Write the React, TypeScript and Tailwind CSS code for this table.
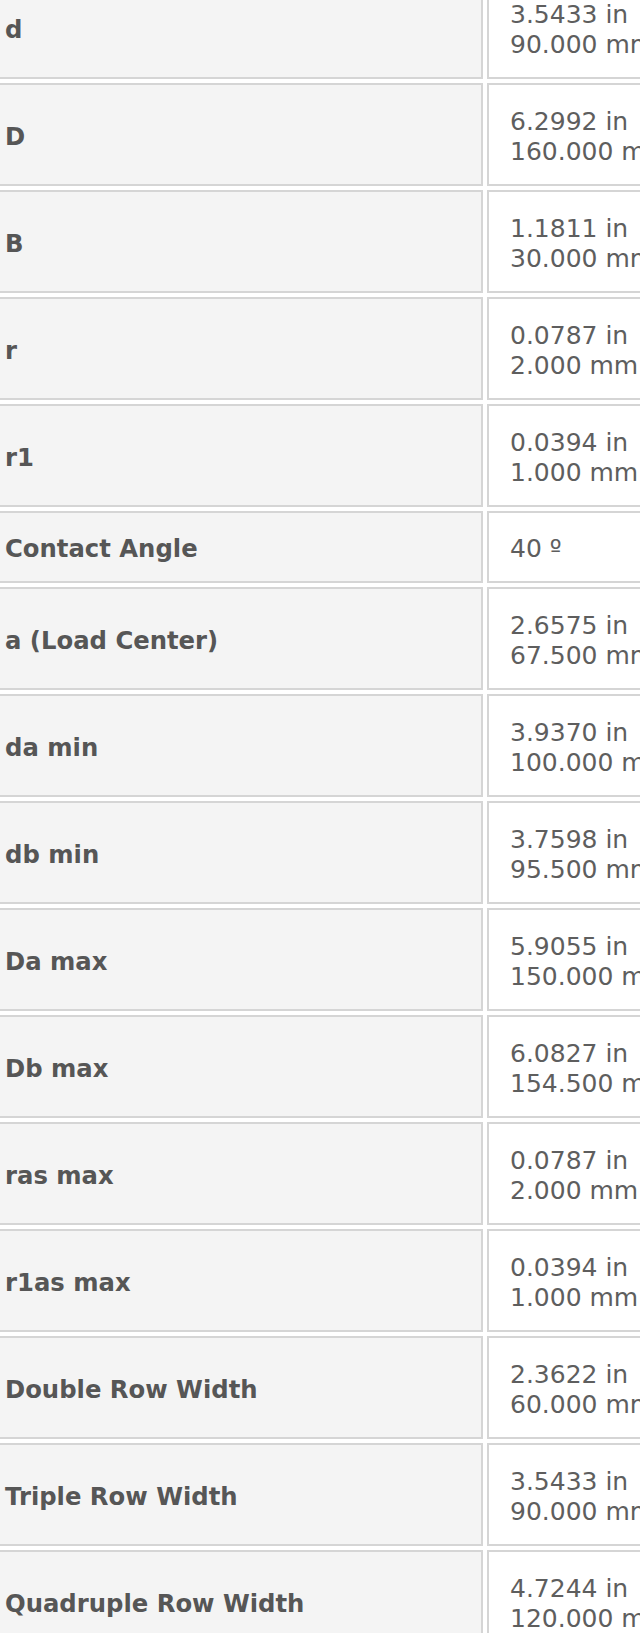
const rows: { label: string; values: string[] }[] = [
  { label: 'd', values: ['3.5433 in', '90.000 mm'] },
  { label: 'D', values: ['6.2992 in', '160.000 mm'] },
  { label: 'B', values: ['1.1811 in', '30.000 mm'] },
  { label: 'r', values: ['0.0787 in', '2.000 mm'] },
  { label: 'r1', values: ['0.0394 in', '1.000 mm'] },
  { label: 'Contact Angle', values: ['40 º'] },
  { label: 'a (Load Center)', values: ['2.6575 in', '67.500 mm'] },
  { label: 'da min', values: ['3.9370 in', '100.000 mm'] },
  { label: 'db min', values: ['3.7598 in', '95.500 mm'] },
  { label: 'Da max', values: ['5.9055 in', '150.000 mm'] },
  { label: 'Db max', values: ['6.0827 in', '154.500 mm'] },
  { label: 'ras max', values: ['0.0787 in', '2.000 mm'] },
  { label: 'r1as max', values: ['0.0394 in', '1.000 mm'] },
  { label: 'Double Row Width', values: ['2.3622 in', '60.000 mm'] },
  { label: 'Triple Row Width', values: ['3.5433 in', '90.000 mm'] },
  { label: 'Quadruple Row Width', values: ['4.7244 in', '120.000 mm'] },
];

function SpecRow({ label, values }: { label: string; values: string[] }) {
  const tall = values.length > 1;
  return (
    <div className={`flex gap-[4px] ${tall ? 'h-[103px]' : 'h-[72px]'}`}>
      <div className="w-[483px] shrink-0 flex items-center bg-[#f4f4f4] border-2 border-l-0 border-[#d5d5d5] pl-[5px] pt-[4px] font-bold text-[24.3px] text-[#565656]">
        {label}
      </div>
      <div className="w-[240px] shrink-0 flex flex-col justify-center bg-white border-2 border-[#d5d5d5] pl-[21px] pt-[4px] text-[25px] text-[#5e5e5e] whitespace-nowrap">
        {values.map((v) => (
          <div key={v}>{v}</div>
        ))}
      </div>
    </div>
  );
}

export default function App() {
  return (
    <div className="w-[640px] h-[1633px] overflow-hidden bg-white font-['DejaVu_Sans',Verdana,sans-serif] leading-[30px]">
      <div className="-mt-[24px] flex flex-col gap-[4px]">
        {rows.map((r) => (
          <SpecRow key={r.label} label={r.label} values={r.values} />
        ))}
      </div>
    </div>
  );
}
